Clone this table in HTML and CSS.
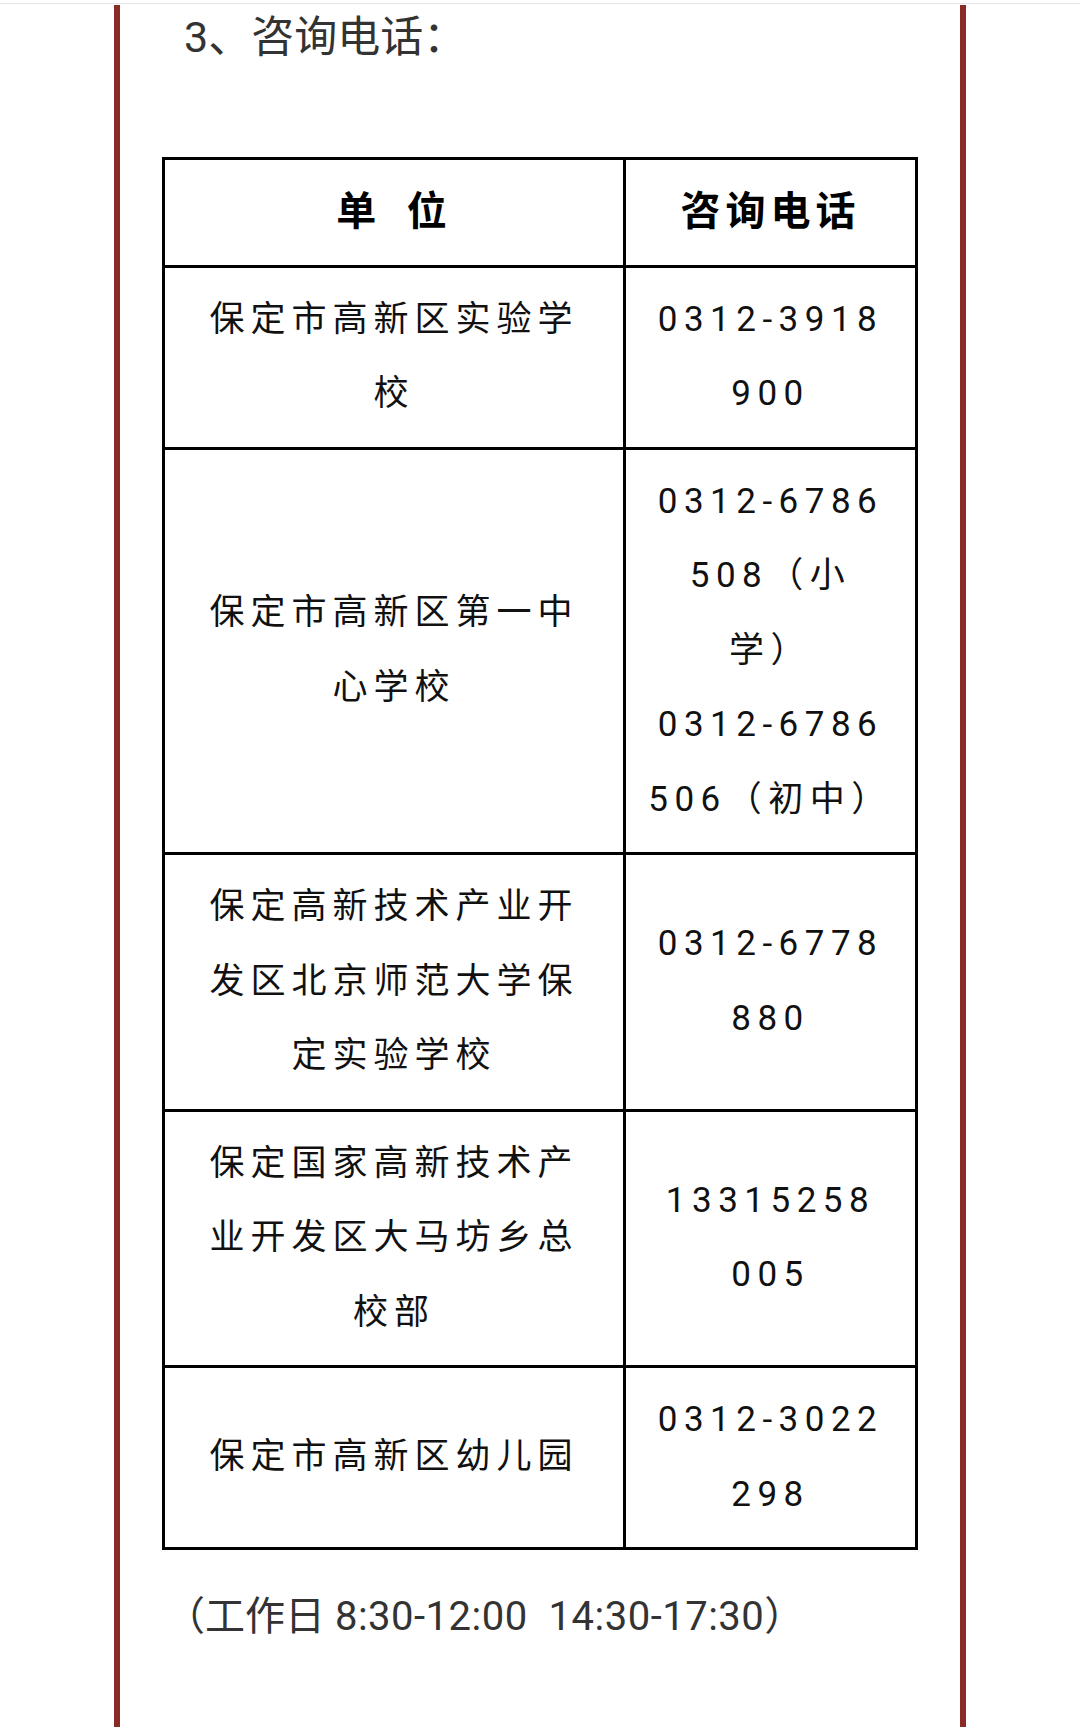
FILE: index.html
```html
<!DOCTYPE html>
<html lang="zh-CN">
<head>
<meta charset="utf-8">
<title>咨询电话</title>
<link rel="stylesheet" href="styles.css">
</head>
<body>
<div class="topline"></div>
<div class="frame">
  <p class="section-title">3、咨询电话：</p>
  <table class="contacts">
    <colgroup><col class="c-unit"><col class="c-tel"></colgroup>
    <thead>
      <tr><th>单&ensp;位</th><th>咨询电话</th></tr>
    </thead>
    <tbody>
      <tr><td class="unit">保定市高新区实验学校</td><td class="tel">0312-3918<br>900</td></tr>
      <tr><td class="unit">保定市高新区第一中心学校</td><td class="tel">0312-6786<br>508（小<br>学）<br>0312-6786<br>506（初中）</td></tr>
      <tr><td class="unit">保定高新技术产业开发区北京师范大学保定实验学校</td><td class="tel">0312-6778<br>880</td></tr>
      <tr><td class="unit">保定国家高新技术产业开发区大马坊乡总校部</td><td class="tel">13315258<br>005</td></tr>
      <tr><td class="unit">保定市高新区幼儿园</td><td class="tel">0312-3022<br>298</td></tr>
    </tbody>
  </table>
  <p class="note">（工作日 <span class="time">8:30-12:00&nbsp; 14:30-17:30</span>）</p>
</div>
</body>
</html>
```

FILE: styles.css
```css
html, body {
  margin: 0;
  padding: 0;
  background: #ffffff;
}

body {
  font-family: Roboto, "Noto Sans CJK SC", sans-serif;
  color: #111;
}

.topline {
  height: 1px;
  margin-top: 3px;
  background: #e6e6e6;
}

.frame {
  width: 852px;
  box-sizing: border-box;
  margin: 0 auto;
  padding: 0 42px;
  min-height: calc(100vh - 4px);
  border-left: 6px solid #8b2b27;
  border-right: 6px solid #8b2b27;
}

.section-title {
  margin: 1px 0 0;
  padding-left: 22px;
  font-size: 43px;
  line-height: 64px;
  color: #333;
}

.contacts {
  width: 100%;
  margin-top: 88px;
  border-collapse: collapse;
  table-layout: fixed;
}

.c-unit {
  width: 461px;
}

.contacts th,
.contacts td {
  border: 3px solid #000;
  padding: 15px 10px;
  text-align: center;
  vertical-align: middle;
  line-height: 74.5px;
}

.contacts th {
  font-size: 40px;
  font-weight: 700;
  letter-spacing: 5px;
  color: #000;
}

.contacts td {
  font-size: 35px;
  letter-spacing: 6px;
  color: #111;
}

.contacts td.unit {
  padding: 15px 39px;
}

.contacts td.tel {
  letter-spacing: 6.5px;
  white-space: nowrap;
}

.note {
  margin: 35px 0 0;
  padding-left: 3px;
  font-size: 40px;
  line-height: 64px;
  color: #333;
}

.note .time {
  letter-spacing: 0.5px;
}
```
